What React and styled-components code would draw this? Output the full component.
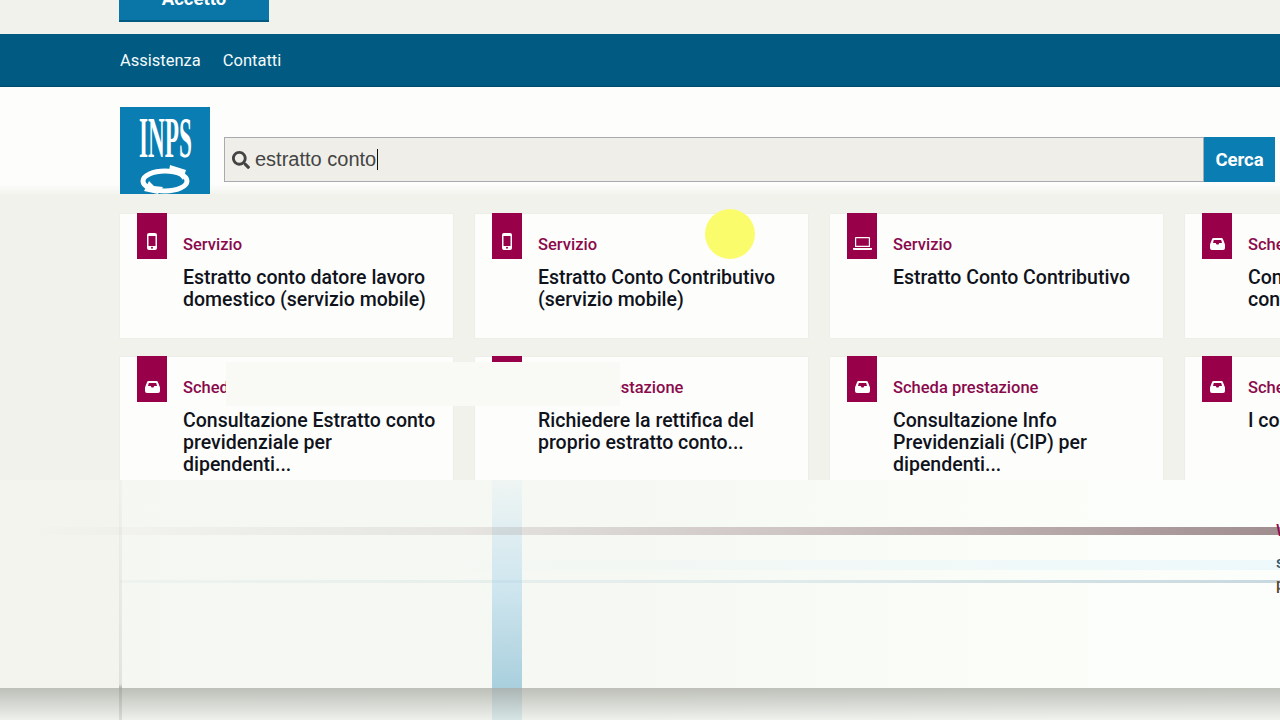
import styled, { createGlobalStyle } from 'styled-components';
import { FaSearch } from 'react-icons/fa';

const GlobalStyle = createGlobalStyle`
  html, body { margin: 0; padding: 0; background: #f2f2ed; }
  body { font-family: "Roboto", "Liberation Sans", sans-serif; }
`;

const cards = [
  { kind: 'phone', label: 'Servizio', title: 'Estratto conto datore lavoro domestico (servizio mobile)' },
  { kind: 'phone', label: 'Servizio', title: 'Estratto Conto Contributivo (servizio mobile)' },
  { kind: 'laptop', label: 'Servizio', title: 'Estratto Conto Contributivo' },
  { kind: 'inbox', label: 'Scheda prestazione', title: 'Consultazione Posizione contributiva' },
  { kind: 'inbox', label: 'Scheda prestazione', title: 'Consultazione Estratto conto previdenziale per dipendenti...' },
  { kind: 'inbox', label: 'Scheda prestazione', title: 'Richiedere la rettifica del proprio estratto conto...' },
  { kind: 'inbox', label: 'Scheda prestazione', title: 'Consultazione Info Previdenziali (CIP) per dipendenti...' },
  { kind: 'inbox', label: 'Scheda prestazione', title: 'I contributi versati' },
];

function PhoneIcon() {
  return (
    <svg width="10" height="17" viewBox="0 0 10 17">
      <path fill="#fff" fillRule="evenodd" d="M2 0h6a2 2 0 0 1 2 2v13a2 2 0 0 1-2 2H2a2 2 0 0 1-2-2V2a2 2 0 0 1 2-2zM1.5 3v10h7V3zM5 13.8a1 1 0 1 0 0 2 1 1 0 0 0 0-2z" />
    </svg>
  );
}

function LaptopIcon() {
  return (
    <svg width="19" height="13" viewBox="0 0 19 13">
      <path fill="#fff" fillRule="evenodd" d="M3 0h13a1 1 0 0 1 1 1v9H2V1a1 1 0 0 1 1-1zM3.2 1.2v7.6h12.6V1.2zM0 11h19v1a1 1 0 0 1-1 1H1a1 1 0 0 1-1-1z" />
    </svg>
  );
}

function InboxIcon() {
  return (
    <svg width="15" height="12" viewBox="0 0 15 12">
      <path fill="#fff" fillRule="evenodd" d="M3.5 0h8a1.5 1.5 0 0 1 1.4 1L15 6.5V10a2 2 0 0 1-2 2H2a2 2 0 0 1-2-2V6.5L2.100 1A1.500 1.500 0 0 1 3.500 0zM3.800 2L3 5h2.800l.7 1.500h2L9.200 5H12l-.8-3z" />
    </svg>
  );
}

function Logo() {
  return (
    <LogoBox>
      <svg width="90" height="87" viewBox="0 0 90 87">
        <rect width="90" height="87" fill="#0a7db2" />
        <text x="19" y="50" fill="#fff" fontFamily="Liberation Serif" fontWeight="700" fontSize="56" textLength="53" lengthAdjust="spacingAndGlyphs">INPS</text>
        <ellipse cx="45" cy="74" rx="22" ry="10" fill="none" stroke="#fff" strokeWidth="5" />
        <path fill="#fff" d="M50 58l16 5-3 10-5-6-9-2zM38 87l-14-3 5-10 5 5 9 1z" />
      </svg>
    </LogoBox>
  );
}

function App() {
  return (
    <Page>
      <GlobalStyle />
      <CookieStrip>
        <AcceptButton>Accetto</AcceptButton>
      </CookieStrip>
      <NavBar>
        <NavLink>Assistenza</NavLink>
        <NavLink>Contatti</NavLink>
      </NavBar>
      <Header>
        <Logo />
        <SearchRow>
          <SearchField>
            <FaSearch size={18} color="#444" />
            <SearchText>estratto conto</SearchText>
            <Caret />
          </SearchField>
          <SearchButton>Cerca</SearchButton>
        </SearchRow>
      </Header>
      <CardGrid>
        {cards.map((card, i) => (
          <Card key={i}>
            <Tab>
              {card.kind === 'phone' && <PhoneIcon />}
              {card.kind === 'laptop' && <LaptopIcon />}
              {card.kind === 'inbox' && <InboxIcon />}
            </Tab>
            <CardBody>
              <Label>{card.label}</Label>
              <Title>{card.title}</Title>
            </CardBody>
          </Card>
        ))}
      </CardGrid>

      <Highlight />
      <GlitchPatch />
      <FadePanel>
        <LeftShade />
        <BlueStripe />
        <VerticalLine />
        <RedLine />
        <PaleBlueBand />
        <PaleBlueLine />
        <EdgeText $top={42} $color="#8e0b4f">W</EdgeText>
        <EdgeText $top={74} $color="#33566b">si</EdgeText>
        <EdgeText $top={96} $color="#5a4a33">pt</EdgeText>
        <BottomBand />
      </FadePanel>
    </Page>
  );
}

export default App;

const Page = styled.div`
  position: relative;
  width: 1280px;
  height: 720px;
  overflow: hidden;
  background: #f2f2ed;
`;

const CookieStrip = styled.div`
  display: flow-root;
  height: 34px;
  padding-left: 119px;
`;

const AcceptButton = styled.div`
  box-sizing: border-box;
  width: 150px;
  height: 44px;
  margin-top: -22px;
  display: flex;
  align-items: center;
  justify-content: center;
  background: #0a76a8;
  border-bottom: 2px solid #005a82;
  color: #fff;
  font-weight: 700;
  font-size: 18.5px;
`;

const NavBar = styled.nav`
  box-sizing: border-box;
  height: 53px;
  padding-left: 120px;
  display: flex;
  align-items: center;
  gap: 22px;
  background: #005a82;
  border-bottom: 1px solid #004c6e;
`;

const NavLink = styled.a`
  color: #f4fafc;
  font-size: 16.5px;
  font-weight: 400;
`;

const Header = styled.header`
  box-sizing: border-box;
  height: 108px;
  padding: 20px 5px 0 120px;
  display: flex;
  gap: 14px;
  background: linear-gradient(#fdfefc 90%, #f2f2ed 100%);
`;

const LogoBox = styled.div`
  width: 90px;
  height: 87px;
  flex: none;
`;

const SearchRow = styled.div`
  flex: 1;
  height: 45px;
  margin-top: 30px;
  display: flex;
`;

const SearchField = styled.div`
  box-sizing: border-box;
  flex: 1;
  display: flex;
  align-items: center;
  padding-left: 7px;
  background: #efeee8;
  border: 1px solid #a9a9b0;
`;

const SearchText = styled.span`
  margin-left: 5px;
  color: #444;
  font-family: "Liberation Sans", sans-serif;
  font-size: 20px;
`;

const Caret = styled.span`
  width: 1px;
  height: 21px;
  margin-left: 1px;
  background: #111;
`;

const SearchButton = styled.div`
  width: 71px;
  display: flex;
  align-items: center;
  justify-content: center;
  background: #0a7db2;
  color: #fff;
  font-size: 18.5px;
  font-weight: 700;
`;

const CardGrid = styled.main`
  display: grid;
  grid-template-columns: repeat(4, 333px);
  grid-auto-rows: 124px;
  column-gap: 22px;
  row-gap: 19px;
  padding: 19px 0 0 120px;
`;

const Card = styled.article`
  display: flex;
  padding-left: 17px;
  background: #fdfefc;
  box-shadow: 0 0 1px #d9d9d4;
`;

const Tab = styled.div`
  flex: none;
  width: 30px;
  height: 46px;
  margin-top: -1px;
  padding-bottom: 9px;
  box-sizing: border-box;
  display: flex;
  justify-content: center;
  align-items: flex-end;
  background: #980049;
`;

const CardBody = styled.div`
  margin-left: 16px;
  padding-top: 20px;
  width: 255px;
  flex: none;
`;

const Label = styled.div`
  color: #8a0a4c;
  font-size: 16.5px;
  font-weight: 500;
  line-height: 22px;
`;

const Title = styled.h3`
  margin: 11px 0 0;
  color: #10131c;
  font-size: 19.5px;
  font-weight: 500;
  line-height: 22px;
`;

const Highlight = styled.div`
  position: absolute;
  left: 705px;
  top: 209px;
  width: 50px;
  height: 50px;
  border-radius: 50%;
  background: #fbfc6c;
  filter: blur(0.6px);
`;

const GlitchPatch = styled.div`
  position: absolute;
  left: 226px;
  top: 362px;
  width: 394px;
  height: 44px;
  background: #f9f9f6;
`;

const FadePanel = styled.div`
  position: absolute;
  left: 0;
  top: 480px;
  width: 1280px;
  height: 240px;
  background: linear-gradient(90deg, #f5f7f2 0, #f6f8f3 50%, #fbfdf9 80%, #fcfefb 100%);
`;

const LeftShade = styled.div`
  position: absolute;
  left: 0;
  top: 0;
  width: 120px;
  height: 208px;
  background: #f3f4ee;
`;

const VerticalLine = styled.div`
  position: absolute;
  left: 119px;
  top: 0;
  width: 3px;
  height: 240px;
  background: linear-gradient(rgba(0, 0, 0, 0.02), rgba(0, 0, 0, 0.08) 85%, rgba(0, 0, 0, 0.3) 87%);
`;

const RedLine = styled.div`
  position: absolute;
  left: 20px;
  top: 47px;
  width: 1260px;
  height: 8px;
  background: linear-gradient(90deg, rgba(120, 100, 100, 0), rgba(120, 100, 100, 0.13) 35%, rgba(120, 90, 95, 0.32) 60%, rgba(110, 80, 85, 0.65));
`;

const PaleBlueBand = styled.div`
  position: absolute;
  left: 380px;
  top: 80px;
  width: 900px;
  height: 10px;
  background: linear-gradient(90deg, rgba(200, 235, 250, 0), rgba(200, 235, 250, 0.3));
`;

const PaleBlueLine = styled.div`
  position: absolute;
  left: 120px;
  top: 100px;
  width: 1160px;
  height: 3px;
  background: linear-gradient(90deg, rgba(150, 190, 205, 0.08), rgba(150, 190, 205, 0.2) 50%, rgba(120, 160, 180, 0.4));
`;

const BlueStripe = styled.div`
  position: absolute;
  left: 492px;
  top: 0;
  width: 30px;
  height: 240px;
  background: linear-gradient(#eff5f3 0, #cfe6ef 45%, #a9cfdd 87%);
`;

const EdgeText = styled.span`
  position: absolute;
  left: 1276px;
  top: ${(p) => p.$top}px;
  color: ${(p) => p.$color};
  font-size: 16px;
  font-weight: 500;
  line-height: 18px;
`;

const BottomBand = styled.div`
  position: absolute;
  left: 0;
  top: 208px;
  width: 1280px;
  height: 32px;
  background: linear-gradient(rgba(170, 172, 165, 0.75), rgba(235, 238, 233, 0.7));
`;
